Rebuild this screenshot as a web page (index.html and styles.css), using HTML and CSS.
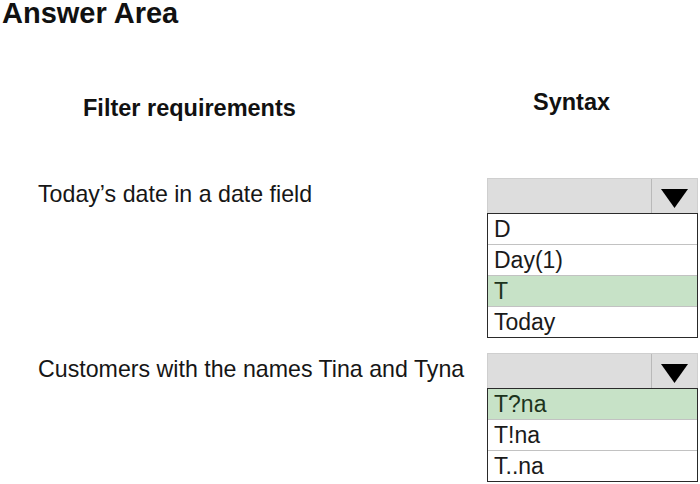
FILE: index.html
```html
<!DOCTYPE html>
<html>
<head>
<meta charset="utf-8">
<link rel="stylesheet" href="styles.css">
</head>
<body>
<div class="page">
  <h1 class="title">Answer Area</h1>
  <div class="heads">
    <div class="head head-left">Filter requirements</div>
    <div class="head head-right">Syntax</div>
  </div>
  <div class="question q1">
    <div class="label">Today’s date in a date field</div>
    <div class="dropdown">
      <div class="dd-head">
        <div class="dd-field"></div>
        <div class="dd-btn"><svg width="27" height="19" viewBox="0 0 27 19"><polygon points="0,0 27,0 13.5,19" fill="#000"/></svg></div>
      </div>
      <ul class="dd-list">
        <li>D</li>
        <li>Day(1)</li>
        <li class="sel">T</li>
        <li>Today</li>
      </ul>
    </div>
  </div>
  <div class="question q2">
    <div class="label">Customers with the names Tina and Tyna</div>
    <div class="dropdown">
      <div class="dd-head">
        <div class="dd-field"></div>
        <div class="dd-btn"><svg width="27" height="19" viewBox="0 0 27 19"><polygon points="0,0 27,0 13.5,19" fill="#000"/></svg></div>
      </div>
      <ul class="dd-list">
        <li class="sel">T?na</li>
        <li>T!na</li>
        <li>T..na</li>
      </ul>
    </div>
  </div>
</div>
</body>
</html>
```

FILE: styles.css
```css
* { box-sizing: border-box; }
html, body { margin: 0; padding: 0; background: #fff; }
body {
  font-family: "Liberation Sans", Arial, sans-serif;
  color: #161616;
  width: 700px;
  height: 484px;
  overflow: hidden;
}
.page { display: flex; flex-direction: column; }
.title {
  margin: 0;
  padding-left: 2px;
  font-size: 29px;
  line-height: 26px;
  font-weight: bold;
  color: #111;
}
.heads {
  display: grid;
  grid-template-columns: 487px 211px;
  margin-top: 64px;
  font-weight: bold;
  font-size: 23.5px;
  line-height: 24px;
  color: #111;
}
.head-left { padding-left: 83px; margin-top: 6px; }
.head-right { padding-left: 46px; }
.question {
  display: grid;
  grid-template-columns: 487px 211px;
  align-items: start;
}
.q1 { margin-top: 58px; }
.q2 { margin-top: 15px; }
.label {
  padding-left: 38px;
  margin-top: 4px;
  font-size: 23.2px;
  line-height: 24px;
  white-space: nowrap;
}
.dropdown { display: flex; flex-direction: column; width: 211px; }
.dd-head {
  display: flex;
  height: 35px;
  background: #dddddd;
  border: 1px solid #cfcfcf;
  border-bottom: none;
}
.dd-field { flex: 1; }
.dd-btn {
  width: 46px;
  border-left: 1.5px solid #b9b9b9;
  display: flex;
  align-items: flex-end;
  justify-content: center;
  padding-bottom: 5px;
}
.dd-btn svg { display: block; }
.dd-list {
  list-style: none;
  margin: 0;
  padding: 0;
  border: 1.5px solid #2a2a2a;
  background: #fff;
}
.dd-list li {
  height: 31px;
  line-height: 30px;
  padding-left: 6px;
  font-size: 23px;
  color: #1a1a1a;
  border-top: 1px solid #c2c2c2;
}
.dd-list li:first-child { border-top: none; height: 30px; }
.dd-list li.sel { background: #c7e2c7; color: #1c331c; }
```
